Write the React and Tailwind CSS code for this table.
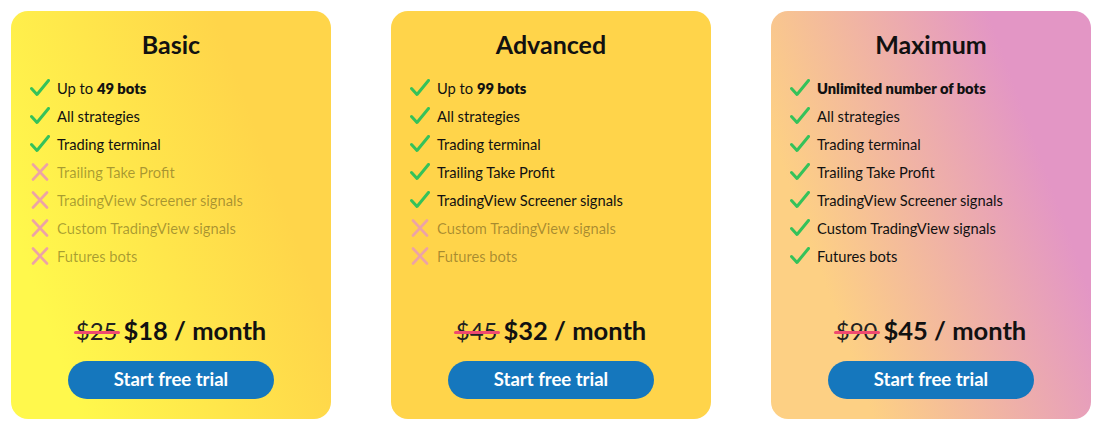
import React from "react";

const plans = [
  {
    name: "Basic",
    bg: "bg-[linear-gradient(70deg,#fff84c_15%,#ffd54a_75%)]",
    first: <>Up to <b className="font-extrabold">49 bots</b></>,
    enabled: 3,
    old: "$25",
    price: "$18",
  },
  {
    name: "Advanced",
    bg: "bg-[#ffd44a]",
    first: <>Up to <b className="font-extrabold">99 bots</b></>,
    enabled: 5,
    old: "$45",
    price: "$32",
  },
  {
    name: "Maximum",
    bg: "bg-[linear-gradient(70deg,#fdd084_22%,#e396c5_78%)]",
    first: <b className="font-extrabold">Unlimited number of bots</b>,
    enabled: 7,
    old: "$90",
    price: "$45",
  },
];

const features = [
  "All strategies",
  "Trading terminal",
  "Trailing Take Profit",
  "TradingView Screener signals",
  "Custom TradingView signals",
  "Futures bots",
];

function Check() {
  return (
    <svg width="20" height="18" viewBox="0 0 20 18" className="shrink-0">
      <path d="M1.5 9.5 L7 15.5 L18.5 1.5" fill="none" stroke="#34c25a" strokeWidth="3" strokeLinecap="round" strokeLinejoin="round" />
    </svg>
  );
}

function Cross() {
  return (
    <svg width="20" height="18" viewBox="0 0 20 18" className="shrink-0">
      <path d="M3 1.5 L17 16.5 M17 1.5 L3 16.5" fill="none" stroke="#eda3a6" strokeWidth="2.6" strokeLinecap="round" />
    </svg>
  );
}

function Card({ plan }) {
  const items = [plan.first, ...features];
  return (
    <div className={`w-[320px] h-[408px] rounded-[17px] ${plan.bg} flex flex-col items-center pt-[19px] pb-[20px]`}>
      <div className="h-[28px] leading-[28px] text-[25px] font-bold text-[#111]">{plan.name}</div>
      <ul className="self-stretch pl-[19px] mt-[16px] flex flex-col">
        {items.map((it, i) => {
          const on = i < plan.enabled;
          return (
            <li key={i} className="h-[28px] flex items-center gap-[7px]">
              {on ? <Check /> : <Cross />}
              <span className={`text-[14.7px] ${on ? "text-[#111]" : "text-black/35"}`}>{it}</span>
            </li>
          );
        })}
      </ul>
      <div className="flex-1" />
      <div className="h-[32px] flex items-center gap-[6px] text-[#111]">
        <span className="relative text-[24px] text-[#222] leading-none">
          {plan.old}
          <span className="absolute left-[-2px] right-[-2px] top-[50%] h-[3px] bg-[#ef4a70] rounded-full" />
        </span>
        <span className="text-[25.5px] font-bold leading-none">{plan.price} / month</span>
      </div>
      <button className="mt-[14px] w-[206px] h-[38px] rounded-full bg-[#1577bd] text-white text-[18.5px] font-bold">
        Start free trial
      </button>
    </div>
  );
}

export default function App() {
  return (
    <div className="w-[1102px] h-[436px] bg-white pt-[11px] pl-[11px] flex gap-[60px]" style={{ fontFamily: "Lato, 'Noto Sans', sans-serif" }}>
      {plans.map((p) => (
        <Card key={p.name} plan={p} />
      ))}
    </div>
  );
}
